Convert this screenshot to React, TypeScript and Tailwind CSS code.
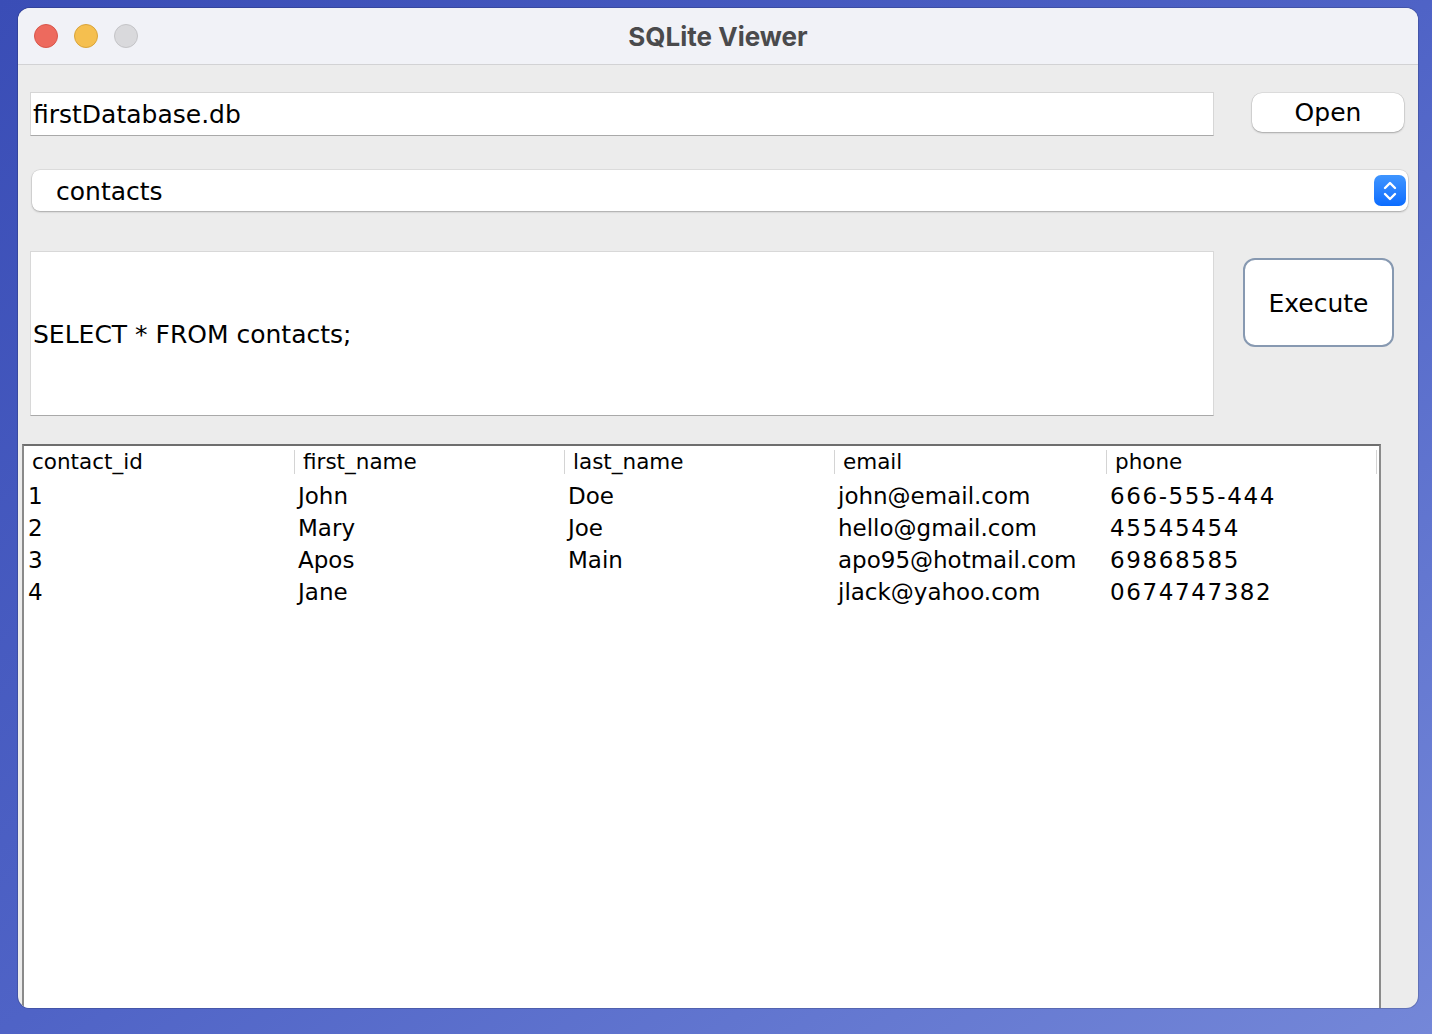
import React from "react";

const COLUMNS = ["contact_id", "first_name", "last_name", "email", "phone"];

const ROWS = [
  ["1", "John", "Doe", "john@email.com", "666-555-444"],
  ["2", "Mary", "Joe", "hello@gmail.com", "45545454"],
  ["3", "Apos", "Main", "apo95@hotmail.com", "69868585"],
  ["4", "Jane", "", "jlack@yahoo.com", "0674747382"],
];

const sans = "font-['DejaVu_Sans','Liberation_Sans',sans-serif]";

function TrafficLights() {
  return (
    <div className="flex items-center gap-[16px] pl-[16px]">
      <div className="w-[24px] h-[24px] rounded-full bg-[#ed6a5e] border border-[#d8564b]" />
      <div className="w-[24px] h-[24px] rounded-full bg-[#f5bf4f] border border-[#d9a43a]" />
      <div className="w-[24px] h-[24px] rounded-full bg-[#d9d9dc] border border-[#c4c4c7]" />
    </div>
  );
}

function Stepper() {
  return (
    <div className="w-[32px] h-[31px] rounded-[7px] bg-gradient-to-b from-[#3f95ff] to-[#0a6cff] flex items-center justify-center">
      <svg width="16" height="24" viewBox="0 0 16 24" fill="none">
        <path d="M3 9 L8 4 L13 9" stroke="white" strokeWidth="2.4" strokeLinecap="round" strokeLinejoin="round" />
        <path d="M3 15 L8 20 L13 15" stroke="white" strokeWidth="2.4" strokeLinecap="round" strokeLinejoin="round" />
      </svg>
    </div>
  );
}

export default function App() {
  return (
    <div className="w-[1432px] h-[1034px] overflow-hidden bg-gradient-to-br from-[#3a4db6] via-[#4f63c6] to-[#7487d8] pt-[8px] pl-[18px]">
      <div className="w-[1400px] h-[1000px] rounded-[12px] overflow-hidden bg-[#ececec] flex flex-col shadow-[0_0_0_1px_rgba(0,0,0,0.15)]">
        {/* title bar */}
        <div className="relative h-[57px] shrink-0 bg-[#f1f2f7] border-b border-[#d2d2d4] flex items-center">
          <TrafficLights />
          <div className="absolute inset-0 flex items-center justify-center">
            <span className="font-['Inter',sans-serif] font-bold text-[26px] text-[#4a4a4c]">SQLite Viewer</span>
          </div>
        </div>

        {/* file row */}
        <div className="flex items-start pt-[27px] pl-[12px]">
          <div className={`w-[1184px] h-[44px] bg-white border border-[#d6d6d6] border-b-[#a9a9a9] flex items-center pl-[2px] pt-[1px] ${sans} text-[25px] text-black`}>
            firstDatabase.db
          </div>
          <button className={`ml-[38px] mt-[1px] w-[152px] h-[39px] rounded-[10px] bg-white shadow-[0_1px_2px_rgba(0,0,0,0.25),0_0_0_0.5px_rgba(0,0,0,0.12)] ${sans} text-[25px] text-black flex items-center justify-center`}>
            Open
          </button>
        </div>

        {/* table combo */}
        <div className="pt-[34px] pl-[14px]">
          <div className={`w-[1376px] h-[41px] rounded-[8px] bg-white shadow-[0_1px_2px_rgba(0,0,0,0.25),0_0_0_0.5px_rgba(0,0,0,0.12)] flex items-center justify-between pl-[24px] pr-[2px] ${sans} text-[25px] text-black`}>
            <span className="pt-[3px]">contacts</span>
            <Stepper />
          </div>
        </div>

        {/* query row */}
        <div className="flex items-start pt-[40px] pl-[12px]">
          <div className={`w-[1184px] h-[165px] bg-white border border-[#d8d8d8] border-b-[#a9a9a9] flex items-center pl-[2px] pt-[3px] ${sans} text-[25px] text-black`}>
            SELECT * FROM contacts;
          </div>
          <button className={`ml-[29px] mt-[7px] w-[151px] h-[89px] rounded-[12px] bg-white border-2 border-[#8799b1] ${sans} text-[25px] text-black flex items-center justify-center pt-[2px]`}>
            Execute
          </button>
        </div>

        {/* results table */}
        <div className="pt-[28px] pl-[4px] flex-1 flex flex-col">
          <div className="w-[1359px] flex-1 bg-white border-2 border-b-0 border-[#8a8a8a] border-t-[#6e6e6e]">
            <div className={`grid grid-cols-[270px_270px_270px_272px_271px] h-[31px] items-center pt-[1px] ${sans} text-[21.5px] text-black`}>
              {COLUMNS.map((c, i) => (
                <div key={c} className={`h-[24px] flex items-center pl-[8px] ${i > 0 ? "border-l border-[#d4d4d4]" : ""} ${i === 4 ? "border-r" : ""}`}>
                  {c}
                </div>
              ))}
            </div>
            <div className="pt-[3px]">
              {ROWS.map((r) => (
                <div key={r[0]} className={`grid grid-cols-[270px_270px_270px_272px_271px] h-[32px] items-center ${sans} text-[23px] text-black`}>
                  {r.map((v, i) => (
                    <div key={i} className={`pl-[4px] leading-none ${i === 4 ? "tracking-[1.6px]" : ""}`}>
                      {v}
                    </div>
                  ))}
                </div>
              ))}
            </div>
          </div>
        </div>
      </div>
    </div>
  );
}
